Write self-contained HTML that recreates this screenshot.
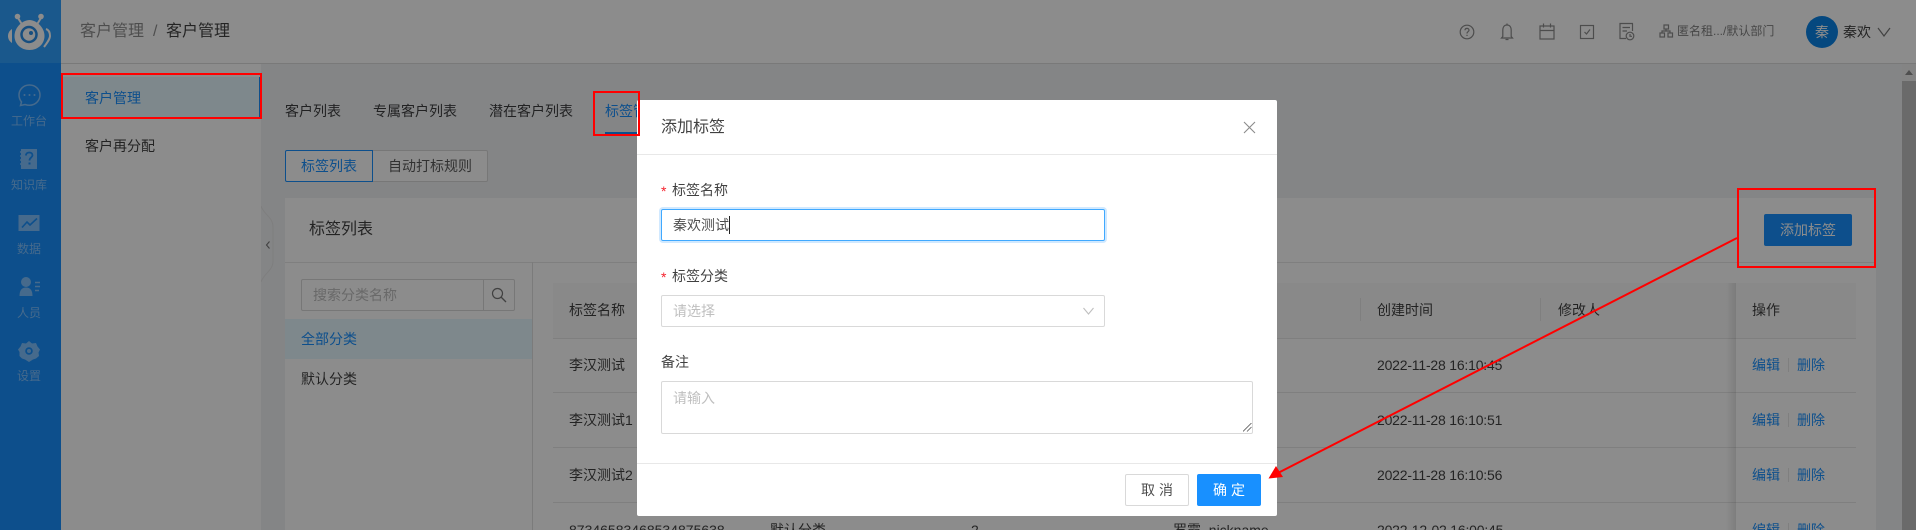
<!DOCTYPE html>
<html lang="zh">
<head>
<meta charset="utf-8">
<title>客户管理</title>
<style>
*{box-sizing:border-box;margin:0;padding:0}
html,body{width:1916px;height:530px;overflow:hidden;background:#fff}
body{position:relative;font-family:"Liberation Sans","Noto Sans CJK SC",sans-serif;font-size:14px;color:rgba(0,0,0,.65)}
.a{position:absolute}
.t{position:absolute;white-space:nowrap;line-height:20px;height:20px}
.b{color:#1890ff}
.k{color:rgba(0,0,0,.75)}
.m{letter-spacing:-.2px}
.s{font-size:12px;color:#8fd0ff;line-height:16px;height:16px;width:61px;text-align:left}
.ln{position:absolute;height:1px;background:#e8e8e8}
.bx{position:absolute;border:2px solid #f00;z-index:30}
</style>
</head>
<body>
<!-- page under the mask -->
<div class="a" style="left:61px;top:64px;width:1855px;height:466px;background:#f0f2f5"></div>
<!-- header -->
<div class="a" style="left:0;top:0;width:1916px;height:64px;background:#fff;border-bottom:1px solid #dcdcdc"></div>
<!-- sidebar -->
<div class="a" style="left:0;top:0;width:61px;height:530px;background:#1890ff"></div>
<div class="a" style="left:0;top:0;width:61px;height:63px;background:#30a0ff"></div>
<svg class="a" style="left:0;top:0" width="61" height="63" viewBox="0 0 61 63">
  <path d="M18 18l5 8M41 18l-5 8" stroke="#fff" stroke-width="2"/>
  <circle cx="17.500" cy="16.500" r="2.800" fill="#fff"/><circle cx="41" cy="16.500" r="2.800" fill="#fff"/>
  <path d="M29.500 20C36 20 44.500 27 44.500 36C44.500 44 38 50 29.500 50C21 50 14.500 44 14.500 36C14.500 27 23 20 29.500 20Z" fill="#fff"/>
  <path d="M12 29C9 31 8 33.500 8 36C8 38.500 9 41 12 43Z" fill="#fff"/>
  <path d="M46 29C49 30 50 33 50 36C50 39 47 43 44 47" stroke="#fff" stroke-width="2" fill="none"/>
  <circle cx="29" cy="34.500" r="7.500" fill="none" stroke="#2a8fe8" stroke-width="2.500"/>
  <circle cx="31" cy="33" r="2" fill="#2a8fe8"/>
</svg>
<!-- sidebar icons -->
<svg class="a" style="left:0;top:80px" width="61" height="290" viewBox="0 80 61 290">
  <path d="M29.500 85C23.500 85 19 89.500 19 95C19 98 20 100 21.500 102L20.500 105.500L25 104.500C26.500 105 28 105.300 29.500 105.300C35.500 105.300 40 100.500 40 95C40 89.500 35.500 85 29.500 85Z" fill="none" stroke="#80c2ff" stroke-width="1.500"/>
  <circle cx="24.500" cy="95" r="1" fill="#80c2ff"/><circle cx="29.500" cy="95" r="1" fill="#80c2ff"/><circle cx="34.500" cy="95" r="1" fill="#80c2ff"/>
  <path d="M21 149H37V169H21Z" fill="#80c2ff"/>
  <path d="M20 152h3M20 156h3M20 160h3M20 164h3" stroke="#80c2ff" stroke-width="1.500"/>
  <path d="M26 155.500C26 153.500 27.500 152.500 29.300 152.500C31 152.500 32.500 153.500 32.500 155.300C32.500 157.500 29.500 157.500 29.500 160.500" fill="none" stroke="#1890ff" stroke-width="1.800"/>
  <rect x="28.500" y="162.500" width="2" height="2" fill="#1890ff"/>
  <rect x="18.500" y="215" width="21" height="16" fill="#80c2ff"/>
  <path d="M22 227.500L27 222L30 225L37 218.500" fill="none" stroke="#1890ff" stroke-width="1.600"/>
  <circle cx="26" cy="282" r="5" fill="#80c2ff"/>
  <path d="M19.500 296C19.500 290 22 287.500 26 287.500C30 287.500 32.500 290 32.500 296Z" fill="#80c2ff"/>
  <path d="M35 282.500h5M35 286.500h5M35 290.500h4" stroke="#80c2ff" stroke-width="1.400"/>
  <path d="M29 341L32 343.500L36 343L37.500 346.500L40 349.500L38.500 352.500L39 356L36 358.500L33 359.500L29 362L25 359.500L22 358.500L19.500 356L19.500 352L18 349.500L20.500 346.500L22 343L26 343.500Z" fill="#80c2ff"/>
  <circle cx="29" cy="351" r="3.800" fill="#1890ff"/><circle cx="29" cy="351" r="2" fill="#80c2ff"/>
</svg>
<div class="t s" style="left:11px;top:113px;color:#80c2ff">工作台</div>
<div class="t s" style="left:11px;top:177px;color:#80c2ff">知识库</div>
<div class="t s" style="left:17px;top:241px;color:#80c2ff">数据</div>
<div class="t s" style="left:17px;top:305px;color:#80c2ff">人员</div>
<div class="t s" style="left:17px;top:368px;color:#80c2ff">设置</div>
<!-- breadcrumb -->
<div class="t" style="left:80px;top:21px;font-size:16px;line-height:22px;height:22px;color:rgba(0,0,0,.45)">客户管理</div>
<div class="t" style="left:153px;top:21px;font-size:16px;line-height:22px;height:22px;color:rgba(0,0,0,.45)">/</div>
<div class="t k" style="left:166px;top:21px;font-size:16px;line-height:22px;height:22px">客户管理</div>
<!-- header right -->
<svg class="a" style="left:1455px;top:18px" width="225" height="28" viewBox="1455 18 225 28" fill="none" stroke="#8c8c8c" stroke-width="1.200">
  <circle cx="1467" cy="32" r="6.800"/>
  <path d="M1465 30.300C1465 29 1466 28.400 1467 28.400C1468.200 28.400 1469 29.200 1469 30.200C1469 31.600 1467 31.600 1467 33.500"/><path d="M1467 34.800v1.200"/>
  <path d="M1507 25C1504 25 1502.800 27.500 1502.800 30V36.500L1501.500 38H1512.500L1511.200 36.500V30C1511.200 27.500 1510 25 1507 25Z"/><path d="M1507 23.500V25M1505.500 39.500H1508.500"/>
  <rect x="1540" y="26" width="14" height="13"/><path d="M1540 30.500H1554M1543.500 23.500V27.500M1550.500 23.500V27.500"/>
  <rect x="1580.500" y="25.500" width="13" height="13"/><path d="M1584.500 32L1586.500 34L1590 29.500"/>
  <path d="M1633 23.500H1620V38.500H1626"/><path d="M1632.500 23.500V31"/><path d="M1622.500 27.500H1630M1622.500 31H1627"/>
  <circle cx="1630" cy="36" r="3.800"/><path d="M1630 34V36.300H1632"/>
  <rect x="1664" y="25" width="4.500" height="4"/><rect x="1660" y="33" width="4.500" height="4"/><rect x="1668" y="33" width="4.500" height="4"/>
  <path d="M1666 29V31M1662 33V31H1670V33"/>
</svg>
<div class="t" style="left:1677px;top:23px;font-size:12px;line-height:16px;height:16px;color:rgba(0,0,0,.5)">匿名租.../默认部门</div>
<div class="a" style="left:1806px;top:16px;width:32px;height:32px;border-radius:50%;background:#0a84e8;color:#fff;font-size:14px;line-height:32px;text-align:center">秦</div>
<div class="t k" style="left:1843px;top:22px">秦欢</div>
<svg class="a" style="left:1877px;top:27px" width="14" height="10" viewBox="0 0 14 10"><path d="M1 1L7 9L13 1" fill="none" stroke="#777" stroke-width="1.200"/></svg>
<!-- secondary menu -->
<div class="a" style="left:61px;top:64px;width:200px;height:466px;background:#fff"></div>
<div class="a" style="left:61px;top:77px;width:200px;height:41px;background:#e6f7ff;border-right:2px solid #1890ff"></div>
<div class="t b" style="left:85px;top:88px">客户管理</div>
<div class="t k" style="left:85px;top:136px">客户再分配</div>
<!-- collapse handle -->
<svg class="a" style="left:261px;top:203px" width="14" height="82" viewBox="0 0 14 82"><path d="M0 3C3 12 12 14 12 24V58C12 68 3 70 0 79" fill="#f0f2f5" stroke="#e6e6e6" stroke-width="1"/><path d="M8.500 38.500L5.500 42L8.500 45.500" fill="none" stroke="#777" stroke-width="1.100"/></svg>
<!-- tabs -->
<div class="t k" style="left:285px;top:101px">客户列表</div>
<div class="t k" style="left:373px;top:101px">专属客户列表</div>
<div class="t k" style="left:489px;top:101px">潜在客户列表</div>
<div class="t b" style="left:605px;top:101px">标签管理</div>
<div class="a" style="left:605px;top:132px;width:56px;height:2px;background:#1890ff"></div>
<!-- segmented -->
<div class="a" style="left:285px;top:150px;width:88px;height:32px;border:1px solid #1890ff;border-radius:2px 0 0 2px;background:#fff"></div>
<div class="a" style="left:373px;top:150px;width:115px;height:32px;border:1px solid #d9d9d9;border-left:0;border-radius:0 2px 2px 0;background:#fff"></div>
<div class="t b" style="left:301px;top:156px">标签列表</div>
<div class="t" style="left:388px;top:156px">自动打标规则</div>
<!-- card -->
<div class="a" style="left:285px;top:198px;width:1591px;height:332px;background:#fff"></div>
<div class="ln" style="left:285px;top:262px;width:1591px"></div>
<div class="t k" style="left:309px;top:219px;font-size:16px;line-height:22px;height:22px">标签列表</div>
<div class="a" style="left:1764px;top:214px;width:88px;height:32px;background:#1890ff;border-radius:2px;color:#fff;line-height:32px;text-align:center">添加标签</div>
<!-- left category panel -->
<div class="a" style="left:532px;top:262px;width:1px;height:268px;background:#e0e0e0"></div>
<div class="a" style="left:301px;top:279px;width:214px;height:32px;border:1px solid #d9d9d9;border-radius:2px;background:#fff"></div>
<div class="a" style="left:483px;top:279px;width:1px;height:32px;background:#d9d9d9"></div>
<div class="t" style="left:313px;top:285px;color:#bfbfbf">搜索分类名称</div>
<svg class="a" style="left:491px;top:287px" width="16" height="16" viewBox="0 0 16 16"><circle cx="6.500" cy="6.500" r="5" fill="none" stroke="#777" stroke-width="1.200"/><path d="M10 10L15 15" stroke="#777" stroke-width="1.300"/></svg>
<div class="a" style="left:285px;top:319px;width:247px;height:40px;background:#e6f7ff"></div>
<div class="t b" style="left:301px;top:329px">全部分类</div>
<div class="t k" style="left:301px;top:369px">默认分类</div>
<!-- table -->
<div class="a" style="left:553px;top:283px;width:1303px;height:55px;background:#fafafa"></div>
<div class="ln" style="left:553px;top:338px;width:1303px"></div>
<div class="ln" style="left:553px;top:392px;width:1303px"></div>
<div class="ln" style="left:553px;top:447px;width:1303px"></div>
<div class="ln" style="left:553px;top:502px;width:1303px"></div>
<div class="a" style="left:1360px;top:298px;width:1px;height:23px;background:#e8e8e8"></div>
<div class="a" style="left:1540px;top:298px;width:1px;height:23px;background:#e8e8e8"></div>
<div class="a" style="left:1726px;top:283px;width:10px;height:247px;background:linear-gradient(to right,rgba(0,0,0,0),rgba(0,0,0,.1))"></div>
<div class="t k" style="left:569px;top:300px">标签名称</div>
<div class="t k" style="left:1377px;top:300px">创建时间</div>
<div class="t k" style="left:1558px;top:300px">修改人</div>
<div class="t k" style="left:1752px;top:300px">操作</div>
<div class="t k" style="left:569px;top:355px">李汉测试</div>
<div class="t k" style="left:569px;top:410px">李汉测试1</div>
<div class="t k" style="left:569px;top:465px">李汉测试2</div>
<div class="t k" style="left:569px;top:520px">87346583468534875638</div>
<div class="t k" style="left:770px;top:520px">默认分类</div>
<div class="t k" style="left:971px;top:520px">2</div>
<div class="t k" style="left:1173px;top:520px">罗霞_nickname</div>
<div class="t k m" style="left:1377px;top:355px">2022-11-28 16:10:45</div>
<div class="t k m" style="left:1377px;top:410px">2022-11-28 16:10:51</div>
<div class="t k m" style="left:1377px;top:465px">2022-11-28 16:10:56</div>
<div class="t k m" style="left:1377px;top:520px">2022-12-02 16:00:45</div>
<div class="t b" style="left:1752px;top:355px">编辑</div><div class="a" style="left:1788px;top:358px;width:1px;height:14px;background:#e8e8e8"></div><div class="t b" style="left:1797px;top:355px">删除</div>
<div class="t b" style="left:1752px;top:410px">编辑</div><div class="a" style="left:1788px;top:413px;width:1px;height:14px;background:#e8e8e8"></div><div class="t b" style="left:1797px;top:410px">删除</div>
<div class="t b" style="left:1752px;top:465px">编辑</div><div class="a" style="left:1788px;top:468px;width:1px;height:14px;background:#e8e8e8"></div><div class="t b" style="left:1797px;top:465px">删除</div>
<div class="t b" style="left:1752px;top:520px">编辑</div><div class="a" style="left:1788px;top:523px;width:1px;height:7px;background:#e8e8e8"></div><div class="t b" style="left:1797px;top:520px">删除</div>
<!-- scrollbar -->
<div class="a" style="left:1902px;top:64px;width:14px;height:466px;background:#f1f1f1"></div>
<div class="a" style="left:1902px;top:81px;width:14px;height:449px;background:#c1c1c1"></div>
<div class="a" style="left:1905px;top:70px;width:0;height:0;border-left:4px solid transparent;border-right:4px solid transparent;border-bottom:5px solid #909090"></div>
<!-- mask -->
<div class="a" style="left:0;top:0;width:1916px;height:530px;background:rgba(0,0,0,.45);z-index:10"></div>
<!-- dialog -->
<div class="a" style="left:637px;top:100px;width:640px;height:416px;background:#fff;border-radius:2px;z-index:20">
  <div class="t" style="left:24px;top:17px;font-size:16px;line-height:22px;height:22px;color:rgba(0,0,0,.75)">添加标签</div>
  <svg class="a" style="left:606px;top:21px" width="13" height="13" viewBox="0 0 13 13"><path d="M1 1L12 12M12 1L1 12" stroke="#8c8c8c" stroke-width="1.100"/></svg>
  <div class="a" style="left:0;top:54px;width:640px;height:1px;background:#e8e8e8"></div>
  <div class="t" style="left:24px;top:81px;color:#f5222d;font-size:14px">*</div>
  <div class="t" style="left:35px;top:80px;color:rgba(0,0,0,.75)">标签名称</div>
  <div class="a" style="left:24px;top:109px;width:444px;height:32px;border:1px solid #40a9ff;border-radius:2px;box-shadow:0 0 0 2px rgba(24,144,255,.2)"></div>
  <div class="t" style="left:36px;top:115px;color:rgba(0,0,0,.7)">秦欢测试</div>
  <div class="a" style="left:92px;top:116px;width:1px;height:18px;background:#222"></div>
  <div class="t" style="left:24px;top:167px;color:#f5222d">*</div>
  <div class="t" style="left:35px;top:166px;color:rgba(0,0,0,.75)">标签分类</div>
  <div class="a" style="left:24px;top:195px;width:444px;height:32px;border:1px solid #d9d9d9;border-radius:2px"></div>
  <div class="t" style="left:36px;top:201px;color:#bfbfbf">请选择</div>
  <svg class="a" style="left:446px;top:207px" width="11" height="8" viewBox="0 0 11 8"><path d="M.5 1L5.500 7L10.500 1" fill="none" stroke="#bfbfbf" stroke-width="1.100"/></svg>
  <div class="t" style="left:24px;top:252px;color:rgba(0,0,0,.75)">备注</div>
  <div class="a" style="left:24px;top:281px;width:592px;height:53px;border:1px solid #d9d9d9;border-radius:2px"></div>
  <div class="t" style="left:36px;top:288px;color:#bfbfbf">请输入</div>
  <svg class="a" style="left:606px;top:323px" width="9" height="9" viewBox="0 0 9 9"><path d="M0 8.500L8.500 0M4 8.500L8.500 4" stroke="#555" stroke-width=".8"/></svg>
  <div class="a" style="left:0;top:363px;width:640px;height:1px;background:#e8e8e8"></div>
  <div class="a" style="left:488px;top:374px;width:64px;height:32px;border:1px solid #d9d9d9;border-radius:2px;background:#fff;line-height:30px;text-align:center;color:rgba(0,0,0,.7);letter-spacing:4px;padding-left:4px;white-space:nowrap">取消</div>
  <div class="a" style="left:560px;top:374px;width:64px;height:32px;border-radius:2px;background:#1890ff;line-height:32px;text-align:center;color:#fff;letter-spacing:4px;padding-left:4px;white-space:nowrap">确定</div>
</div>
<!-- annotations -->
<div class="bx" style="left:61px;top:73px;width:201px;height:46px"></div>
<div class="bx" style="left:593px;top:91px;width:47px;height:45px"></div>
<div class="bx" style="left:1737px;top:188px;width:139px;height:80px"></div>
<svg class="a" style="left:0;top:0;z-index:31" width="1916" height="530" viewBox="0 0 1916 530">
  <path d="M1737 238L1276 474" stroke="#f00" stroke-width="2" fill="none"/>
  <path d="M1268.500 478.500L1276 466L1283 477Z" fill="#f00"/>
</svg>
</body>
</html>
